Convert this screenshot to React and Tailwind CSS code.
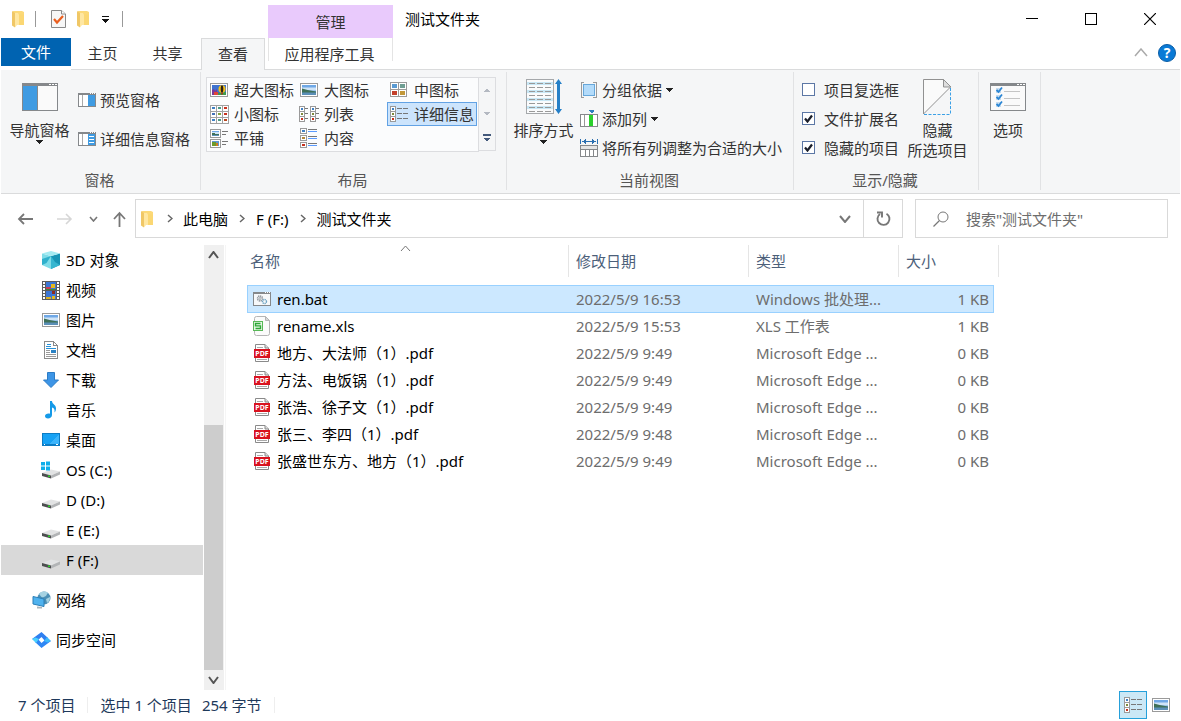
import React from "react";

/* ---------- drawing helpers ---------- */

function Svg({ w, h, children, crisp = true, className = "" }) {
  return (
    <svg
      width={w}
      height={h}
      viewBox={`0 0 ${w} ${h}`}
      fill="none"
      aria-hidden="true"
      shapeRendering={crisp ? "crispEdges" : "auto"}
      className={`block shrink-0 ${className}`}
    >
      {children}
    </svg>
  );
}

function FolderIcon() {
  return (
    <Svg w={13} h={18} crisp={false}>
      <path d="M1 1h9l2 1v13H3z" fill="#fcd978" />
      <path d="M0 1l3 2v14.500L0 15.500z" fill="#f0c766" />
      <path d="M3 3h3l1 2v10H5l-2 2.500z" fill="#ffe7a2" />
      <path d="M7 4.500h5V15H7z" fill="#fbd773" />
    </Svg>
  );
}

function CheckDocIcon() {
  return (
    <Svg w={15} h={18} crisp={false}>
      <path d="M.5.5h10l4 3.500v13.500H.5z" fill="#f7f7f7" stroke="#8a8a8a" />
      <path d="M10.500.5v3.500h4" stroke="#8a8a8a" fill="#fff" />
      <path d="M3 9l3 3.500L12 6" stroke="#ea5f1f" strokeWidth="2.200" />
    </Svg>
  );
}

function Caret() {
  return (
    <Svg w={7} h={4}>
      <path d="M0 0h7L4 4H3z" fill="#222" />
    </Svg>
  );
}

function Chevron({ dir = "down", color = "#666", w = 10, h = 6, sw = 2 }) {
  const pts = {
    down: `1,1 ${w / 2},${h - 1} ${w - 1},1`,
    up: `1,${h - 1} ${w / 2},1 ${w - 1},${h - 1}`,
    right: `1,1 ${w - 1},${h / 2} 1,${h - 1}`,
  };
  return (
    <Svg w={w} h={h} crisp={false}>
      <polyline points={pts[dir]} stroke={color} strokeWidth={sw} />
    </Svg>
  );
}

function Landscape({ x, y, w, h }) {
  return (
    <g>
      <rect x={x} y={y} width={w} height={h} fill="#6fa8e6" />
      <rect x={x} y={y + h * 0.25} width={w} height={h * 0.3} fill="#cfe4f7" />
      <path
        d={`M${x} ${y + h * 0.35}l${w * 0.4} ${h * 0.15}l${w * 0.6} ${h * 0.15}v${h * 0.15}H${x}z`}
        fill="#3f7058"
      />
      <rect x={x} y={y + h * 0.75} width={w} height={h * 0.25} fill="#5b8fb8" />
    </g>
  );
}

function PictureIcon() {
  return (
    <Svg w={18} h={14} crisp={false}>
      <rect x=".5" y=".5" width="17" height="13" fill="#fff" stroke="#9a9a9a" />
      <Landscape x={2} y={2} w={14} h={10} />
    </Svg>
  );
}

function ExtraLargeIcon() {
  return (
    <Svg w={18} h={14} crisp={false}>
      <rect x=".5" y=".5" width="17" height="13" fill="#fff" stroke="#9a9a9a" />
      <rect x="2" y="2" width="14" height="10" fill="#3f73cf" />
      <path d="M2 12V7l2-1 1 2 2-2v3l2 1v2z" fill="#7a3a9a" />
      <rect x="4" y="9" width="4" height="3" fill="#e2463a" />
      <path d="M8 12V10l8-1v3z" fill="#3f9a4b" />
      <ellipse cx="12" cy="6" rx="3.500" ry="3.800" fill="#f4c21c" />
      <ellipse cx="12" cy="6" rx="1.300" ry="3.800" fill="#2a2018" />
      <rect x="11" y="9.500" width="2" height="2" fill="#a13c1d" />
    </Svg>
  );
}

function Tile({ x, y, c, w = 6, h = 6 }) {
  return (
    <g>
      <rect x={x + 0.5} y={y + 0.5} width={w - 1} height={h - 1} fill="#fff" stroke="#9a9a9a" />
      <rect x={x + 2} y={y + 2} width={w - 4} height={h - 4} fill={c} />
    </g>
  );
}

function MediumIcon() {
  return (
    <Svg w={18} h={16}>
      <Tile x={0} y={0} w={9} h={8} c="#5a9ad2" />
      <Tile x={8} y={0} w={9} h={8} c="#6f9e93" />
      <Tile x={0} y={7} w={9} h={8} c="#c3402b" />
      <Tile x={8} y={7} w={9} h={8} c="#c2983a" />
    </Svg>
  );
}

function SmallIcon() {
  const colors = ["#3f80c4", "#4c9a84", "#c8321e", "#4372b8", "#7fa23c", "#c8321e", "#3f80c4", "#4c9a84", "#b8461e"];
  return (
    <Svg w={19} h={19}>
      {colors.map((c, i) => (
        <g key={i}>
          <rect x={(i % 3) * 6 + 0.5} y={Math.floor(i / 3) * 6 + 0.5} width="6" height="6" fill="#fff" stroke="#a2a2a2" />
          <rect x={(i % 3) * 6 + 2} y={Math.floor(i / 3) * 6 + 2} width="3" height="2" fill={c} />
        </g>
      ))}
    </Svg>
  );
}

function ListIcon() {
  const colors = ["#3f80c4", "#7f8a3c", "#c8321e"];
  return (
    <Svg w={20} h={16}>
      {[0, 11].map((x) =>
        colors.map((c, i) => (
          <g key={x + c}>
            <Tile x={x} y={i * 5} w={6} h={6} c={c} />
            <rect x={x + 6} y={i * 5 + 2} width="3" height="1" fill="#777" />
          </g>
        ))
      )}
    </Svg>
  );
}

function DetailsIcon() {
  const colors = ["#3f80c4", "#7f8a3c", "#c8321e"];
  return (
    <Svg w={18} h={16}>
      {colors.map((c, i) => (
        <g key={c}>
          <Tile x={0} y={i * 5} w={6} h={6} c={c} />
          <rect x="7" y={i * 5 + 2} width="5" height="1" fill="#777" />
          <rect x="13" y={i * 5 + 2} width="5" height="1" fill="#777" />
        </g>
      ))}
    </Svg>
  );
}

function TilesIcon() {
  return (
    <Svg w={19} h={19}>
      <rect x=".5" y=".5" width="10" height="8" fill="#fff" stroke="#9a9a9a" />
      <Landscape x={2} y={2} w={7} h={5} />
      <rect x=".5" y="10.500" width="10" height="8" fill="#fff" stroke="#9a9a9a" />
      <rect x="2" y="12" width="7" height="5" fill="#5f97cf" />
      <rect x="2" y="13" width="4" height="4" fill="#6c9a2c" />
      <rect x="6" y="14" width="2" height="3" fill="#d07a24" />
      <rect x="12" y="2" width="6" height="1" fill="#777" />
      <rect x="12" y="5" width="4" height="1" fill="#777" />
      <rect x="12" y="12" width="6" height="1" fill="#777" />
      <rect x="12" y="15" width="4" height="1" fill="#777" />
    </Svg>
  );
}

function ContentIcon() {
  const colors = ["#3f80c4", "#b3883c", "#c8321e"];
  return (
    <Svg w={18} h={20}>
      {colors.map((c, i) => (
        <g key={c}>
          <Tile x={0} y={i * 7} w={7} h={6} c={c} />
          <rect x="8" y={i * 7 + 1} width="9" height="1" fill="#777" />
          <rect x="8" y={i * 7 + 3} width="9" height="1" fill="#5b9bff" />
        </g>
      ))}
    </Svg>
  );
}

function NavPaneIcon() {
  return (
    <Svg w={36} h={28}>
      <rect x=".5" y=".5" width="35" height="27" fill="#fafafa" stroke="#85888b" />
      <rect x="0" y="0" width="36" height="3" fill="#85888b" />
      <path d="M27 1h2v1h-2zM30 1h2v1h-2zM33 1h2v1h-2z" fill="#fff" />
      <rect x="1" y="3" width="14" height="24" fill="#3f9be2" />
      <rect x="15" y="3" width="1" height="24" fill="#85888b" />
    </Svg>
  );
}

function SidePaneIcon({ lines }) {
  return (
    <Svg w={18} h={14}>
      <rect x=".5" y=".5" width="17" height="13" fill="#fff" stroke="#85888b" />
      <rect x="0" y="0" width="18" height="2" fill="#85888b" />
      <path d="M12 0h1v1h-1zM14 0h1v1h-1zM16 0h1v1h-1z" fill="#fff" />
      <rect x="4" y="2" width="1" height="11" fill="#aaa" />
      <rect x="10" y="2" width="7" height="11" fill="#3f9be2" />
      {lines && <path d="M11 4h5v1h-5zM11 7h5v1h-5zM11 10h5v1h-5z" fill="#fff" />}
    </Svg>
  );
}

function SortIcon() {
  const rows = [0, 1, 2, 3, 4, 5, 6, 7];
  return (
    <Svg w={36} h={36} crisp={false}>
      <rect x=".5" y=".5" width="27" height="34" fill="#fafbfc" stroke="#a5a8ab" />
      {rows.map((r) => (
        <g key={r} shapeRendering="crispEdges">
          {r % 2 === 0 && <rect x="1" y={3 + r * 4} width="26" height="3" fill="#c9e8f6" />}
          <path d={`M3 ${4 + r * 4}h6v1h-6zM11 ${4 + r * 4}h6v1h-6zM19 ${4 + r * 4}h6v1h-6z`} fill="#999" />
        </g>
      ))}
      <path d="M32.500 0l3.500 5h-2v25h2l-3.500 5-3.500-5h2V5h-2z" fill="#2580c8" />
    </Svg>
  );
}

function GroupIcon() {
  return (
    <Svg w={18} h={18}>
      <path d="M4 1.500H1.500v15H4M13 1.500h3.500v15H13" stroke="#9a9a9a" />
      <rect x="3.500" y="3.500" width="11" height="11" fill="#b3dbfa" stroke="#66a7da" />
    </Svg>
  );
}

function AddColumnIcon() {
  return (
    <Svg w={18} h={17}>
      <rect x=".5" y="4.500" width="17" height="12" fill="#fff" stroke="#85888b" />
      <rect x="4" y="5" width="1" height="11" fill="#999" />
      <rect x="9" y="5" width="4" height="11" fill="#2ad02c" />
      <path d="M9 0h5v1l-2 2h-1L9 1z" fill="#2b7fc0" />
    </Svg>
  );
}

function FitColumnsIcon() {
  return (
    <Svg w={18} h={18}>
      <path d="M0 0h1v5H0zM17 0h1v5h-1zM2 2h14v1H2zM4 1h1v3H4zM3 2h1v1H3zM13 1h1v3h-1zM5 0h1v5H5zM12 0h1v5h-1z" fill="#2b6fb0" />
      <rect x=".5" y="6.500" width="17" height="11" fill="#fff" stroke="#85888b" />
      <rect x="1" y="7" width="16" height="3" fill="#e4e4e4" />
      <path d="M1 10h16v1H1zM5 11h1v6H5zM9 11h1v6H9zM13 11h1v6h-1z" fill="#85888b" />
    </Svg>
  );
}

function HideIcon() {
  return (
    <Svg w={29} h={37} crisp={false}>
      <path d="M.5.5h20l7 7.500L.5 35z" fill="#fafafa" stroke="#919191" />
      <path d="M20.500.5V8h7.500z" fill="#dedede" stroke="#919191" />
      <path d="M27.500 9v27M1 35.500h27" stroke="#3ba0e6" strokeDasharray="3 1.500" />
    </Svg>
  );
}

function OptionsIcon() {
  return (
    <Svg w={36} h={28} crisp={false}>
      <rect x=".5" y=".5" width="35" height="27" fill="#fafafa" stroke="#85888b" />
      <rect width="36" height="3" fill="#85888b" />
      <path d="M27 1h2v1h-2zM30 1h2v1h-2zM33 1h2v1h-2z" fill="#fff" />
      {[4, 11, 18].map((y) => (
        <g key={y}>
          <rect x="6" y={y + 1} width="5" height="5" fill="#c5dcef" />
          <path d={`M6.500 ${y + 3}l2 2L12 ${y + 0.5}`} stroke="#2b86d4" strokeWidth="1.800" />
          <rect x="14" y={y + 4} width="16" height="1" fill="#c4c4c4" />
        </g>
      ))}
    </Svg>
  );
}

function CubeIcon() {
  return (
    <Svg w={18} h={18} crisp={false}>
      <path d="M0 2.500l9 2.500v13l-9-4z" fill="#7fdcE8" />
      <path d="M18 2.500L9 5v13l9-4z" fill="#1795b5" />
      <path d="M0 2.500L9 0l9 2.500L9 5z" fill="#a4ebf2" />
      <path d="M9 5L4.500 12 0 14V8z" fill="#2fb0cc" />
      <path d="M9 5l4 6 5 3-9 4z" fill="#36b6d0" />
    </Svg>
  );
}

function VideoIcon() {
  return (
    <Svg w={18} h={19}>
      <rect width="18" height="19" fill="#5c5c5c" />
      {[1, 4, 7, 10, 13, 16].map((y) => (
        <path key={y} d={`M1 ${y}h2v2H1zM15 ${y}h2v2h-2z`} fill="#fff" />
      ))}
      <rect x="4" y="1" width="10" height="8" fill="#3b76d6" />
      <rect x="4" y="10" width="10" height="8" fill="#3b76d6" />
      <path d="M9 3h4v4H9zM10 15h3v3h-3z" fill="#e3b81e" />
      <path d="M4 6h5v2H4z" fill="#c93b5a" />
      <path d="M4 8h10v1H4z" fill="#3c8a3d" />
      <path d="M4 16h5v2H4z" fill="#d8b024" />
      <path d="M10 10h3v3h-3z" fill="#8d2b20" />
    </Svg>
  );
}

function DocumentIcon() {
  return (
    <Svg w={18} h={18}>
      <path d="M2.500.5h9l4 4v13h-13z" fill="#fff" stroke="#8a8a8a" />
      <path d="M11.500.5v4h4" stroke="#8a8a8a" />
      <path d="M5 3h4v1H5zM4 5h5v1H4zM4 7h10v1H4z" fill="#2791d8" />
      <rect x="9" y="9" width="5" height="3" fill="#2b82c4" />
      <path d="M4 9h4v1H4zM4 11h4v1H4zM4 13h10v1H4zM4 15h10v1H4z" fill="#999" />
    </Svg>
  );
}

function DownloadIcon() {
  return (
    <Svg w={18} h={18} crisp={false}>
      <path d="M5.500 1.500h7V9h4L9 16.500 1.500 9h4z" fill="#3d95e6" stroke="#2c7cc6" />
    </Svg>
  );
}

function MusicIcon() {
  return (
    <Svg w={18} h={18} crisp={false}>
      <path d="M8 0h2c0 3 4 3.500 4 7.500 0 1.500-.5 3-1.500 4 .5-3-.5-4.500-2.500-5V14C10 16 8 17.500 6 17.500s-3-1-3-2.500S4.500 12.500 6.500 12.500c.6 0 1 .1 1.500.3z" fill="#159ae8" />
    </Svg>
  );
}

function DesktopIcon() {
  return (
    <Svg w={18} h={14}>
      <rect width="18" height="13" fill="#0c7cc4" />
      <rect x="1" y="1" width="16" height="10" fill="#17a2f4" />
      <path d="M17 1v10H8z" fill="#3cb4fb" />
      <path d="M2 11h1v1H2zM14 11h2v1h-2z" fill="#fff" />
    </Svg>
  );
}

function DriveIcon({ os }) {
  return (
    <Svg w={20} h={18} crisp={false}>
      <path d="M1 12l9-3.500 9 2-9 4z" fill="#e2e3e4" />
      <path d="M1 12l9 2.500v3l-9-2.500z" fill="#4d4f50" />
      <path d="M10 14.500l9-4v3l-9 4z" fill="#b2b4b6" />
      <rect x="7" y="14.500" width="2" height="1.500" fill="#2cd02c" />
      {os && <path d="M0 1h4v3.500H0zM5 .5h4v4H5zM0 5.500h4V9H0zM5 5.500h4v4H5z" fill="#10aeea" />}
    </Svg>
  );
}

function NetworkIcon() {
  return (
    <Svg w={19} h={18} crisp={false}>
      <circle cx="12" cy="7" r="6.500" fill="#4b8fb5" />
      <path d="M7 3c2-3 7-3 9-1-2 2-1 3-4 4S9 5 7 3zM14 8l4-2c0 3-1 5-3 6z" fill="#a5d2e2" />
      <path d="M1 5.500L12 8v7.500L1 13z" fill="#4fb2ee" stroke="#2b7fb8" />
      <path d="M5 15.500l5 .5v1.500H5z" fill="#aab4ba" />
    </Svg>
  );
}

function SyncIcon() {
  return (
    <Svg w={19} h={18} crisp={false}>
      <path d="M9.500 1L16 7l-3 3-3.500-4L5.500 9.500 0 8z" fill="#2f7ff0" />
      <path d="M9.500 17L3 11l3-3 3.500 4L13.500 8.500 19 10z" fill="#2f86f4" />
      <path d="M0 8l3.500-1.500L7 8l-3 4z" fill="#4bd0ff" />
      <path d="M19 10l-3.500 1.500L12 10l3-4z" fill="#3cb8fb" />
    </Svg>
  );
}

function BatIcon() {
  return (
    <Svg w={18} h={14} crisp={false}>
      <rect x=".5" y=".5" width="17" height="13" fill="#f6f8fa" stroke="#85888b" />
      <rect width="18" height="2" fill="#85888b" />
      <path d="M12 0h1v1h-1zM14 0h1v1h-1zM16 0h1v1h-1z" fill="#fff" />
      <circle cx="7" cy="6.500" r="2.500" stroke="#8a9097" strokeWidth="1.500" strokeDasharray="1.300 .6" />
      <circle cx="7" cy="6.500" r="1" stroke="#8a9097" strokeWidth=".8" />
      <circle cx="11.500" cy="9.500" r="2" stroke="#70a5c4" strokeWidth="1.400" strokeDasharray="1.200 .5" />
    </Svg>
  );
}

function XlsIcon() {
  return (
    <Svg w={18} h={20} crisp={false}>
      <path d="M3.500.5h9l4 4v13a2 2 0 0 1-2 2h-11a2 2 0 0 1-2-2v-15a2 2 0 0 1 2-2z" fill="#fbfbfb" stroke="#b5b5b5" />
      <path d="M12.500.5v4h4z" fill="#d8d8d8" stroke="#b5b5b5" />
      <rect x=".5" y="5.500" width="9" height="9" fill="#e6f6e4" stroke="#58b957" />
      <path d="M7.500 7.500h-5v2.400h5v2.600h-5" stroke="#2da836" strokeWidth="1.400" />
    </Svg>
  );
}

function PdfIcon() {
  return (
    <svg width="16" height="18" viewBox="0 0 16 18" aria-hidden="true" className="block shrink-0">
      <path d="M1.500.5h9.500l3.500 3.500v13.500h-13z" fill="#fff" stroke="#8a8a8a" />
      <path d="M11 .5V4h3.500" fill="#ddd" stroke="#8a8a8a" />
      <path d="M3 3.500h6M3 15.500h10" stroke="#aaa" />
      <rect y="5" width="16" height="9" fill="#d9121f" />
      <text x="8" y="12" textAnchor="middle" fontSize="7" fontWeight="700" fill="#fff" fontFamily="Noto Sans, sans-serif">
        PDF
      </text>
    </svg>
  );
}

/* ---------- ribbon ---------- */

function Group({ label, width, children }) {
  return (
    <section className={`${width} flex shrink-0 flex-col border-r border-[#e1e2e4]`}>
      <div className="flex h-[98px] items-start">{children}</div>
      <h2 className="h-5 pr-[2px] text-center text-[15px] leading-5 text-[#555]">{label}</h2>
    </section>
  );
}

function BigButton({ icon, lines, caret, width }) {
  return (
    <button type="button" className={`${width} flex shrink-0 flex-col items-center`}>
      <span className="flex h-12 items-center pt-[2px]">{icon}</span>
      {lines.map((t) => (
        <span key={t} className="h-5 whitespace-nowrap leading-5">
          {t}
        </span>
      ))}
      {caret && <Caret />}
    </button>
  );
}

function SmallButton({ icon, text, caret }) {
  return (
    <button type="button" className="flex h-[29px] items-center gap-1 whitespace-nowrap">
      <span className="flex w-[18px] justify-center">{icon}</span>
      <span>{text}</span>
      {caret && <Caret />}
    </button>
  );
}

const layouts = [
  ["超大图标", <ExtraLargeIcon />],
  ["大图标", <PictureIcon />],
  ["中图标", <MediumIcon />],
  ["小图标", <SmallIcon />],
  ["列表", <ListIcon />],
  ["详细信息", <DetailsIcon />],
  ["平铺", <TilesIcon />],
  ["内容", <ContentIcon />],
];

function LayoutGallery() {
  return (
    <div className="mt-[5px] ml-[5px] flex">
      <div className="grid h-[75px] w-[273px] grid-cols-[90px_90px_90px] grid-rows-[24px_24px_24px] border border-[#dcdde0] bg-[#fbfcfd]">
        {layouts.map(([name, icon]) => (
          <button
            key={name}
            type="button"
            aria-pressed={name === "详细信息"}
            className="flex items-center gap-[5px] border border-transparent pl-px whitespace-nowrap aria-pressed:border-[#62a2e4] aria-pressed:bg-[#cce4fc]"
          >
            <span className="flex w-5 shrink-0 justify-center">{icon}</span>
            {name}
          </button>
        ))}
      </div>
      <div className="flex h-[74px] w-[17px] flex-col border-y border-r border-[#dcdde0]">
        <button type="button" aria-label="上一行" className="flex flex-1 items-center justify-center">
          <Svg w={6} h={4}><path d="M3 0l3 4H0z" fill="#b4b9c2" /></Svg>
        </button>
        <button type="button" aria-label="下一行" className="flex flex-1 items-center justify-center">
          <Svg w={6} h={4}><path d="M3 4l3-4H0z" fill="#b4b9c2" /></Svg>
        </button>
        <button type="button" aria-label="更多布局" className="flex flex-1 items-center justify-center">
          <Svg w={8} h={8}><path d="M0 0h8v2H0zM1 4h6L4 8z" fill="#43597b" /></Svg>
        </button>
      </div>
    </div>
  );
}

function Check({ text, checked }) {
  return (
    <label className="flex h-[29px] items-center gap-[9px] whitespace-nowrap">
      <span className="relative flex">
        <input
          type="checkbox"
          defaultChecked={checked}
          className="peer size-[13px] appearance-none border border-[#5c77a5] bg-white"
        />
        <span className="pointer-events-none absolute inset-0 hidden items-center justify-center peer-checked:flex">
          <Svg w={9} h={9} crisp={false}>
            <path d="M1 4.500l2.500 3L8 1.500" stroke="#1b1f2a" strokeWidth="2.200" />
          </Svg>
        </span>
      </span>
      {text}
    </label>
  );
}

function Ribbon() {
  return (
    <div className="flex border-b border-[#dadbdc] bg-[#f5f6f7] pt-[2px] pb-[3px] text-[#333]">
      <Group label="窗格" width="w-[200px]">
        <BigButton width="w-[77px]" icon={<NavPaneIcon />} lines={["导航窗格"]} caret />
        <div className="flex flex-col gap-[10px] pt-[13px]">
          <SmallButton icon={<SidePaneIcon />} text="预览窗格" />
          <SmallButton icon={<SidePaneIcon lines />} text="详细信息窗格" />
        </div>
      </Group>
      <Group label="布局" width="w-[306px]">
        <LayoutGallery />
      </Group>
      <Group label="当前视图" width="w-[287px]">
        <BigButton width="w-[73px]" icon={<SortIcon />} lines={["排序方式"]} caret />
        <div className="flex flex-col items-start pt-[3px]">
          <SmallButton icon={<GroupIcon />} text="分组依据" caret />
          <SmallButton icon={<AddColumnIcon />} text="添加列" caret />
          <SmallButton icon={<FitColumnsIcon />} text="将所有列调整为合适的大小" />
        </div>
      </Group>
      <Group label="显示/隐藏" width="w-[185px]">
        <div className="flex flex-col pt-[3px] pl-2">
          <Check text="项目复选框" />
          <Check text="文件扩展名" checked />
          <Check text="隐藏的项目" checked />
        </div>
        <BigButton width="w-[77px]" icon={<HideIcon />} lines={["隐藏", "所选项目"]} />
      </Group>
      <Group label="" width="w-[62px]">
        <BigButton width="w-[58px]" icon={<OptionsIcon />} lines={["选项"]} />
      </Group>
    </div>
  );
}

/* ---------- address bar ---------- */

function AddressBar() {
  return (
    <div className="flex h-12 items-center pr-3 pb-px">
      <div className="flex w-[134px] shrink-0 items-center pt-[2px] pl-4">
        <button type="button" aria-label="后退" className="mr-6">
          <Svg w={16} h={12} crisp={false}>
            <path d="M16 6H2M7 1L2 6l5 5" stroke="#777" strokeWidth="1.800" />
          </Svg>
        </button>
        <button type="button" aria-label="前进" className="mr-4" disabled>
          <Svg w={16} h={12} crisp={false}>
            <path d="M0 6h14M9 1l5 5-5 5" stroke="#d6d6d6" strokeWidth="1.600" />
          </Svg>
        </button>
        <button type="button" aria-label="最近位置" className="mr-[15px]">
          <Chevron w={9} h={6} color="#777" sw={1.6} />
        </button>
        <button type="button" aria-label="向上">
          <Svg w={13} h={16} crisp={false}>
            <path d="M6.500 16V2M1 8l5.500-6L12 8" stroke="#777" strokeWidth="1.800" />
          </Svg>
        </button>
      </div>
      <div className="mt-[2px] flex h-[39px] min-w-0 flex-1 items-center border border-[#d9d9d9]">
        <nav className="flex flex-1 items-center pl-[5px] whitespace-nowrap text-black">
          <FolderIcon />
          <span className="ml-[13px] mr-[10px]"><Chevron dir="right" w={6} h={9} sw={1.5} /></span>
          <a href="#pc">此电脑</a>
          <span className="mx-[11px]"><Chevron dir="right" w={6} h={9} sw={1.5} /></span>
          <a href="#f">F (F:)</a>
          <span className="mx-[11px]"><Chevron dir="right" w={6} h={9} sw={1.5} /></span>
          <a href="#folder">测试文件夹</a>
        </nav>
        <button type="button" aria-label="历史记录" className="flex h-full w-9 items-center justify-center">
          <Chevron w={12} h={8} color="#777" />
        </button>
        <button type="button" aria-label="刷新" className="flex h-full w-[39px] items-center justify-center border-l border-[#d9d9d9]">
          <Svg w={15} h={15} crisp={false}>
            <path d="M10.500 2.700a6 6 0 1 1-6.500.3" stroke="#777" strokeWidth="1.900" />
            <path d="M1 1.500h5v5" stroke="#777" strokeWidth="1.900" />
          </Svg>
        </button>
      </div>
      <label className="mt-[2px] ml-3 flex h-[39px] w-[253px] items-center border border-[#d9d9d9] pl-[17px]">
        <Svg w={16} h={16} crisp={false}>
          <circle cx="10" cy="6" r="5" stroke="#777" />
          <path d="M6.500 9.500L.5 15.500" stroke="#777" strokeWidth="1.200" />
        </Svg>
        <input
          type="search"
          aria-label="搜索"
          placeholder='搜索"测试文件夹"'
          className="ml-[17px] w-0 flex-1 bg-transparent outline-none placeholder:text-[#6d6d6d]"
        />
      </label>
    </div>
  );
}

/* ---------- navigation tree ---------- */

const places = [
  ["3D 对象", <CubeIcon />],
  ["视频", <VideoIcon />],
  ["图片", <PictureIcon />],
  ["文档", <DocumentIcon />],
  ["下载", <DownloadIcon />],
  ["音乐", <MusicIcon />],
  ["桌面", <DesktopIcon />],
  ["OS (C:)", <DriveIcon os />],
  ["D (D:)", <DriveIcon />],
  ["E (E:)", <DriveIcon />],
  ["F (F:)", <DriveIcon />],
];

function Sidebar() {
  return (
    <aside className="flex w-[225px] shrink-0 border-r border-[#f5f5f5]">
      <nav className="w-[202px] text-black">
        <ul>
          {places.map(([name, icon]) => (
            <li key={name}>
              <a
                href="#place"
                aria-current={name === "F (F:)" ? "page" : undefined}
                className="flex h-[30px] items-center gap-[5px] pl-10 aria-[current=page]:bg-[#d9d9d9]"
              >
                <span className="flex w-5 justify-center">{icon}</span>
                {name}
              </a>
            </li>
          ))}
        </ul>
        <a href="#network" className="mt-[10px] flex h-[30px] items-center gap-[5px] pl-[31px]">
          <NetworkIcon />
          网络
        </a>
        <a href="#sync" className="mt-[10px] flex h-[30px] items-center gap-[5px] pl-[31px]">
          <SyncIcon />
          同步空间
        </a>
      </nav>
      <div className="ml-px flex w-5 flex-col bg-[#f0f0f0]">
        <button type="button" aria-label="向上滚动" className="flex h-5 items-center justify-center pr-px">
          <Chevron dir="up" w={11} h={8} color="#555" />
        </button>
        <div className="grow-[160]" />
        <div className="mr-px grow-[245] bg-[#cdcdcd]" />
        <button type="button" aria-label="向下滚动" className="flex h-5 items-center justify-center pr-px">
          <Chevron w={11} h={8} color="#555" />
        </button>
      </div>
    </aside>
  );
}

/* ---------- file list ---------- */

const files = [
  { name: "ren.bat", date: "2022/5/9 16:53", type: "Windows 批处理...", size: "1 KB", icon: <BatIcon />, selected: true },
  { name: "rename.xls", date: "2022/5/9 15:53", type: "XLS 工作表", size: "1 KB", icon: <XlsIcon /> },
  { name: "地方、大法师（1）.pdf", date: "2022/5/9 9:49", type: "Microsoft Edge ...", size: "0 KB", icon: <PdfIcon /> },
  { name: "方法、电饭锅（1）.pdf", date: "2022/5/9 9:49", type: "Microsoft Edge ...", size: "0 KB", icon: <PdfIcon /> },
  { name: "张浩、徐子文（1）.pdf", date: "2022/5/9 9:49", type: "Microsoft Edge ...", size: "0 KB", icon: <PdfIcon /> },
  { name: "张三、李四（1）.pdf", date: "2022/5/9 9:48", type: "Microsoft Edge ...", size: "0 KB", icon: <PdfIcon /> },
  { name: "张盛世东方、地方（1）.pdf", date: "2022/5/9 9:49", type: "Microsoft Edge ...", size: "0 KB", icon: <PdfIcon /> },
];

function FileTable() {
  return (
    <main className="min-w-0 flex-1 pl-[21px]">
      <table className="w-[752px] table-fixed border-separate border-spacing-0 whitespace-nowrap text-[#6d6d6d]">
        <colgroup>
          <col className="w-[322px]" />
          <col className="w-[180px]" />
          <col className="w-[150px]" />
          <col className="w-[95px]" />
          <col className="w-[5px]" />
        </colgroup>
        <thead>
          <tr className="h-8 text-left text-[#4c607a]">
            <th className="relative border-r border-[#e5e5e5] p-0 pl-[3px] font-normal">
              名称
              <span className="absolute inset-x-0 top-0 flex justify-center pr-1">
                <Chevron dir="up" w={11} h={7} color="#777" sw={1} />
              </span>
            </th>
            <th className="border-r border-[#e5e5e5] p-0 pl-[7px] font-normal">修改日期</th>
            <th className="border-r border-[#e5e5e5] p-0 pl-[7px] font-normal">类型</th>
            <th colSpan={2} className="border-r border-[#e5e5e5] p-0 pl-[7px] font-normal">大小</th>
          </tr>
          <tr aria-hidden="true" className="h-2">
            <td colSpan={5} className="p-0" />
          </tr>
        </thead>
        <tbody>
          {files.map((f) => {
            const c = f.selected ? "border-y border-[#99d1ff] bg-[#cce8ff]" : "pb-[2px]";
            return (
              <tr key={f.name} className={f.selected ? "h-7" : "h-[27px]"}>
                <td className={`p-0 ${c} ${f.selected ? "border-l pl-[5px]" : "pl-[6px]"}`}>
                  <span className="flex items-center gap-[6px] text-black">
                    <span className="flex w-[18px] justify-center">{f.icon}</span>
                    {f.name}
                  </span>
                </td>
                <td className={`p-0 pl-[7px] ${c}`}>{f.date}</td>
                <td className={`p-0 pl-[7px] ${c}`}>{f.type}</td>
                <td className={`p-0 text-right ${c} ${f.selected ? "border-r pr-1" : "pr-[5px]"}`}>{f.size}</td>
                <td className="p-0" />
              </tr>
            );
          })}
        </tbody>
      </table>
    </main>
  );
}

/* ---------- window ---------- */

export default function App() {
  return (
    <div className="flex min-h-screen flex-col bg-white px-px font-['Noto_Sans','Noto_Sans_CJK_SC',sans-serif] text-[15px] leading-5">
      <header>
        <div className="flex h-[38px] pr-px">
          <div className="flex w-[267px] shrink-0 items-center pl-[11px]">
            <FolderIcon />
            <span className="ml-[10px] h-4 w-px bg-[#999]" />
            <button type="button" aria-label="属性" className="ml-[15px]"><CheckDocIcon /></button>
            <button type="button" aria-label="新建文件夹" className="ml-[11px]"><FolderIcon /></button>
            <button type="button" aria-label="自定义快速访问工具栏" className="ml-3">
              <Svg w={7} h={7}><path d="M0 0h7v1H0zM0 3h7L4 7H3z" fill="#111" /></Svg>
            </button>
            <span className="ml-[13px] h-4 w-px bg-[#999]" />
          </div>
          <div className="mt-[5px] flex w-[125px] shrink-0 items-center justify-center bg-[#e9cafc] text-[#333]">管理</div>
          <h1 className="flex flex-1 items-center pl-3 text-black">测试文件夹</h1>
          <button type="button" aria-label="最小化" className="flex w-[59px] items-center justify-center">
            <Svg w={12} h={12}><path d="M0 5h12v1H0z" fill="#000" /></Svg>
          </button>
          <button type="button" aria-label="最大化" className="flex w-[59px] items-center justify-center">
            <Svg w={12} h={12}><rect x=".5" y=".5" width="11" height="11" stroke="#000" /></Svg>
          </button>
          <button type="button" aria-label="关闭" className="flex w-[59px] items-center justify-center">
            <Svg w={12} h={12} crisp={false}><path d="M0 0l12 12M12 0L0 12" stroke="#000" strokeWidth="1.200" /></Svg>
          </button>
        </div>
        <div className="flex h-8 items-stretch text-[#333]">
          <button type="button" className="mb-[3px] w-[70px] border-b border-white bg-[#0063b1] text-white">文件</button>
          <div className="flex flex-1 border-b border-[#dadbdc]">
            <button type="button" className="w-[65px] pr-[2px] pb-[2px]">主页</button>
            <button type="button" className="w-[65px] pr-[2px] pb-[2px]">共享</button>
            <button type="button" className="-mb-px w-16 border border-b-0 border-[#dadbdc] bg-[#f5f6f7] pb-[2px]">查看</button>
            <button type="button" className="mb-2 ml-[3px] w-[125px] border-x border-[#e4e4e4] pt-[6px] pr-[2px]">应用程序工具</button>
            <div className="flex flex-1 items-center justify-end gap-[10px] pr-1 pb-[2px]">
              <button type="button" aria-label="折叠功能区">
                <Chevron dir="up" w={14} h={9} color="#aaa" sw={1.5} />
              </button>
              <button type="button" aria-label="帮助" className="flex size-[18px] items-center justify-center rounded-full border border-[#0a5da6] bg-[#0a7ad6] text-[14px] font-bold text-white">
                ?
              </button>
            </div>
          </div>
        </div>
      </header>
      <Ribbon />
      <AddressBar />
      <div className="flex flex-1 pt-[3px]">
        <Sidebar />
        <FileTable />
      </div>
      <footer className="flex h-[31px] items-center pb-[2px] text-[#1e395b]">
        <span className="pl-[17px]">7 个项目</span>
        <span className="ml-3 h-4 w-px bg-[#eee]" />
        <span className="ml-3">选中 1 个项目</span>
        <span className="ml-[10px]">254 字节</span>
        <span className="ml-3 h-4 w-px bg-[#eee]" />
        <div className="ml-auto flex items-center gap-[5px] pr-[10px]">
          <button type="button" aria-label="详细信息视图" className="flex size-7 items-center justify-center border border-[#26a0da] bg-[#cbe8f6]">
            <DetailsIcon />
          </button>
          <button type="button" aria-label="大图标视图"><PictureIcon /></button>
        </div>
      </footer>
    </div>
  );
}
